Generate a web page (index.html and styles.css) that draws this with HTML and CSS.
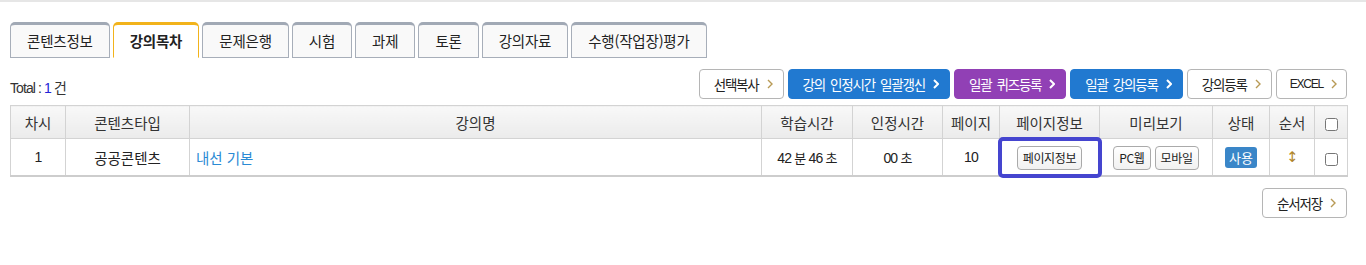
FILE: index.html
```html
<!DOCTYPE html>
<html lang="ko">
<head>
    <meta charset="UTF-8">
    <meta name="viewport" content="width=device-width, initial-scale=1.0">
    <title>강의목차</title>
    <link rel="stylesheet" href="styles.css">
</head>
<body>
    <div class="wrap">
        <ul class="tabs">
            <li class="tab">콘텐츠정보</li>
            <li class="tab on">강의목차</li>
            <li class="tab">문제은행</li>
            <li class="tab">시험</li>
            <li class="tab">과제</li>
            <li class="tab">토론</li>
            <li class="tab">강의자료</li>
            <li class="tab">수행(작업장)평가</li>
        </ul>

        <div class="toolbar">
            <div class="total">Total : <em>1</em> 건</div>
            <div class="btns">
                <button class="btn">선택복사 <svg class="arr" viewBox="0 0 6 10"><path d="M1 1l4 4-4 4"/></svg></button>
                <button class="btn blue">강의 인정시간 일괄갱신 <svg class="arr" viewBox="0 0 6 10"><path d="M1 1l4 4-4 4"/></svg></button>
                <button class="btn purple">일괄 퀴즈등록 <svg class="arr" viewBox="0 0 6 10"><path d="M1 1l4 4-4 4"/></svg></button>
                <button class="btn blue">일괄 강의등록 <svg class="arr" viewBox="0 0 6 10"><path d="M1 1l4 4-4 4"/></svg></button>
                <button class="btn">강의등록 <svg class="arr" viewBox="0 0 6 10"><path d="M1 1l4 4-4 4"/></svg></button>
                <button class="btn latin">EXCEL <svg class="arr" viewBox="0 0 6 10"><path d="M1 1l4 4-4 4"/></svg></button>
            </div>
        </div>

        <table class="list">
            <colgroup>
                <col style="width:55px"><col style="width:124px"><col style="width:572px">
                <col style="width:91px"><col style="width:90px"><col style="width:57px">
                <col style="width:100px"><col style="width:113px"><col style="width:57px">
                <col style="width:45px"><col style="width:33px">
            </colgroup>
            <thead>
                <tr>
                    <th>차시</th>
                    <th>콘텐츠타입</th>
                    <th>강의명</th>
                    <th>학습시간</th>
                    <th>인정시간</th>
                    <th>페이지</th>
                    <th>페이지정보</th>
                    <th>미리보기</th>
                    <th>상태</th>
                    <th>순서</th>
                    <th><input type="checkbox" class="chk"></th>
                </tr>
            </thead>
            <tbody>
                <tr>
                    <td class="num">1</td>
                    <td>공공콘텐츠</td>
                    <td class="title"><a href="#">내선 기본</a></td>
                    <td class="num">42 <small>분</small> 46 <small>초</small></td>
                    <td class="num">00 <small>초</small></td>
                    <td class="num">10</td>
                    <td class="focus"><button class="sbtn">페이지정보</button></td>
                    <td><button class="sbtn">PC웹</button> <button class="sbtn">모바일</button></td>
                    <td><span class="badge">사용</span></td>
                    <td class="order">↕</td>
                    <td><input type="checkbox" class="chk"></td>
                </tr>
            </tbody>
        </table>

        <div class="bottom">
            <button class="btn">순서저장 <svg class="arr" viewBox="0 0 6 10"><path d="M1 1l4 4-4 4"/></svg></button>
        </div>
    </div>
</body>
</html>
```

FILE: styles.css
```css
body {
    margin: 0;
    border-top: 2px solid #e6e6e6;
    font-family: "Noto Sans CJK KR", "Liberation Sans", sans-serif;
    font-size: 14px;
    color: #222;
    background: #fff;
}
.wrap {
    width: 1337px;
    padding-left: 10px;
}

/* tabs */
.tabs {
    list-style: none;
    margin: 20px 0 0;
    padding: 0;
    display: flex;
    gap: 3px;
}
.tab {
    height: 32px;
    line-height: 32px;
    padding: 0 16px;
    font-size: 14.5px;
    letter-spacing: -0.2px;
    background: #f9f9f9;
    border: 1px solid #a7aeb9;
    border-top: 3px solid #a1a9b5;
    border-radius: 5px 5px 0 0;
    color: #222;
}
.tab.on {
    background: #fff;
    border-color: #f2b31b;
    border-bottom-color: #fff;
    font-weight: bold;
}

/* toolbar */
.toolbar {
    display: flex;
    justify-content: space-between;
    align-items: center;
    margin-top: 11px;
}
.total {
    font-family: "Liberation Sans", "Noto Sans CJK KR", sans-serif;
    font-size: 14px;
    letter-spacing: -0.9px;
    color: #333;
    padding-top: 5px;
}
.total em {
    font-style: normal;
    color: #2323d8;
}
.btns {
    display: flex;
    gap: 4px;
}
.btn {
    height: 30px;
    padding: 0 10px 0 14px;
    border: 1px solid #b5b5b5;
    border-radius: 4px;
    background: #fff;
    font-family: "Noto Sans CJK KR", "Liberation Sans", sans-serif;
    font-size: 13.5px;
    letter-spacing: -1.2px;
    word-spacing: 2.5px;
    color: #222;
    display: flex;
    align-items: center;
    gap: 8px;
    cursor: pointer;
}
.btn.latin {
    font-family: "Liberation Sans", sans-serif;
    letter-spacing: -1.2px;
    font-size: 12px;
    padding: 0 9px 0 13px;
}
.btn .arr {
    width: 6px;
    height: 10px;
    fill: none;
    stroke: #b89a55;
    stroke-width: 1.4;
}
.btn.blue {
    background: #2179d0;
    border-color: #2179d0;
    color: #fff;
}
.btn.purple {
    background: #9140b5;
    border-color: #9140b5;
    color: #fff;
}
.btn.blue .arr, .btn.purple .arr {
    stroke: #fff;
    stroke-width: 2;
}

/* table */
.list {
    width: 1337px;
    margin-top: 6px;
    border-collapse: collapse;
    table-layout: fixed;
}
.list th, .list td {
    border: 1px solid #d3d3d3;
    text-align: center;
    padding: 0;
    font-size: 14.5px;
}
.list th {
    height: 32px;
    font-weight: normal;
    color: #333;
    background: linear-gradient(#f8f8f8, #ebebeb);
}
.list td {
    height: 36px;
    background: #fff;
}
.list tr:last-child td { border-bottom: 2px solid #cdcdcd; }
.list td.num {
    font-family: "Liberation Sans", "Noto Sans CJK KR", sans-serif;
    font-size: 14px;
    letter-spacing: -0.8px;
}
.list td.num small { font-size: 13px; }
.list td.title {
    text-align: left;
    padding-left: 6px;
}
.list td.title a {
    color: #2a8ad4;
    text-decoration: none;
}
.list td.focus {
    outline: 4px solid #4545cf;
    outline-offset: -2px;
    border-radius: 3px;
}
.sbtn {
    height: 24px;
    padding: 0 5px;
    border: 1px solid #aaa;
    border-radius: 4px;
    background: linear-gradient(#fff, #f1f1f1);
    font-family: "Noto Sans CJK KR", "Liberation Sans", sans-serif;
    font-size: 12px;
    letter-spacing: -0.3px;
    color: #222;
    vertical-align: middle;
}
.badge {
    display: inline-block;
    padding: 0 4px;
    height: 21px;
    line-height: 21px;
    border-radius: 3px;
    background: #3a86c8;
    color: #fff;
    font-size: 13px;
}
.order {
    font-family: "DejaVu Sans", sans-serif;
    color: #b0852a;
    font-size: 14px;
}
.chk {
    width: 13px;
    height: 13px;
    margin: 0;
    vertical-align: middle;
}

.bottom {
    display: flex;
    justify-content: flex-end;
    margin-top: 11px;
}
```
